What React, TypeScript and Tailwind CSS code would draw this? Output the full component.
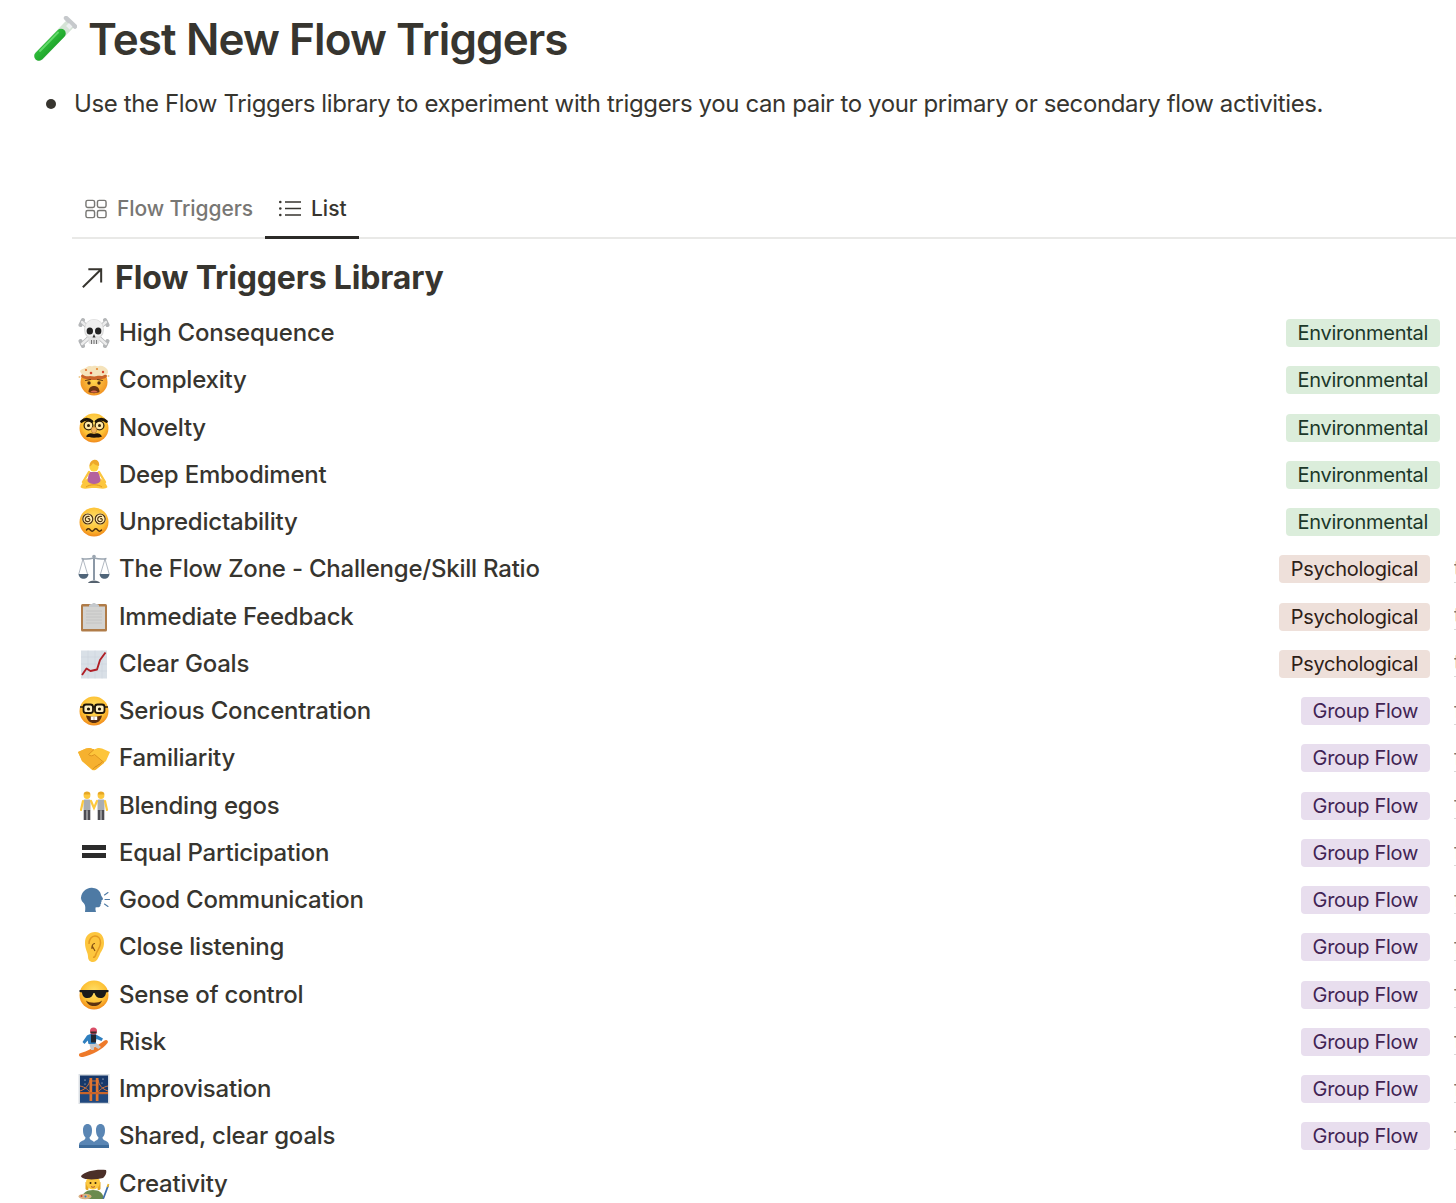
type Tag = 'Environmental' | 'Psychological' | 'Group Flow'

function FaceBase({ id, children }: { id: string; children?: React.ReactNode }) {
  return (
    <svg viewBox="0 0 32 32" className="w-[32px] h-[32px]">
      <defs>
        <radialGradient id={id} cx="50%" cy="38%" r="62%">
          <stop offset="0%" stopColor="#ffe16a" />
          <stop offset="65%" stopColor="#fdc134" />
          <stop offset="100%" stopColor="#f18a1c" />
        </radialGradient>
      </defs>
      <circle cx="16" cy="16" r="14.500" fill={`url(#${id})`} />
      {children}
    </svg>
  )
}

function Svg({ children }: { children: React.ReactNode }) {
  return (
    <svg viewBox="0 0 32 32" className="w-[32px] h-[32px]">
      {children}
    </svg>
  )
}

const Skull = () => (
  <Svg>
    <g stroke="#b4b6b8" strokeWidth="4" strokeLinecap="round">
      <path d="M4 5 28 27M28 5 4 27" />
      <path d="M2.500 8 5 3M29.500 8 27 3M2.500 24 5 29M29.500 24 27 29" />
    </g>
    <g stroke="#ececec" strokeWidth="2.400" strokeLinecap="round">
      <path d="M4 5 28 27M28 5 4 27" />
    </g>
    <ellipse cx="16" cy="12.500" rx="10" ry="10.500" fill="#d8d8d8" />
    <ellipse cx="16" cy="12" rx="9" ry="9.500" fill="#f0f0f0" />
    <rect x="10.500" y="19" width="11" height="8" rx="2" fill="#e2e2e2" />
    <ellipse cx="11.800" cy="14" rx="3.200" ry="3.500" fill="#232323" />
    <ellipse cx="20.200" cy="14" rx="3.200" ry="3.500" fill="#232323" />
    <path d="M16 17 14.500 20.500h3z" fill="#333" />
    <path d="M13.500 23v4M16 23v4M18.500 23v4" stroke="#666" strokeWidth="0.900" />
  </Svg>
)

const Exploding = () => (
  <Svg>
    <defs>
      <radialGradient id="ex" cx="50%" cy="45%" r="62%">
        <stop offset="0%" stopColor="#ffd84f" />
        <stop offset="100%" stopColor="#f08a1d" />
      </radialGradient>
    </defs>
    <circle cx="16" cy="18" r="13.500" fill="url(#ex)" />
    <ellipse cx="16" cy="12" rx="13" ry="4" fill="#c9642a" />
    <path d="M2 7c2-3 5-2 7-4 2-2 4 0 6-1 3-1 4 1 6 0 3-1 6 1 8 3 2 3 1 6-3 6-2 2-5 0-7 1-3 1-5 0-7 0-4 1-9-1-10-5z" fill="#f5e3bb" />
    <circle cx="8" cy="6" r="1.100" fill="#e06d2b" />
    <circle cx="13" cy="9" r="1.300" fill="#d8452c" />
    <circle cx="19" cy="5" r="1.100" fill="#e8862d" />
    <circle cx="25" cy="8" r="1.200" fill="#d8452c" />
    <circle cx="1.500" cy="13" r="1" fill="#f0c98a" />
    <circle cx="30.500" cy="12" r="1" fill="#f0c98a" />
    <circle cx="11" cy="19" r="1.700" fill="#4a2a12" />
    <circle cx="21" cy="19" r="1.700" fill="#4a2a12" />
    <path d="M7.500 16.500 12.500 15.500M24.500 16.500 19.500 15.500" stroke="#6a3d12" strokeWidth="1.200" strokeLinecap="round" />
    <path d="M10.500 28c0-4 2.500-6 5.500-6s5.500 2 5.500 6c-3 1.500-8 1.500-11 0z" fill="#6b3410" />
    <path d="M12.500 28c1-2 6-2 7 0-2 .8-5 .8-7 0z" fill="#d96a4f" />
  </Svg>
)

const Novelty = () => (
  <FaceBase id="f1">
    <circle cx="10.500" cy="13.500" r="4.400" fill="#ffe9a8" stroke="#332009" strokeWidth="1.300" />
    <circle cx="21.500" cy="13.500" r="4.400" fill="#ffe9a8" stroke="#332009" strokeWidth="1.300" />
    <circle cx="10.500" cy="13.500" r="1.500" fill="#332009" />
    <circle cx="21.500" cy="13.500" r="1.500" fill="#332009" />
    <path d="M3.500 9.500c3-3 7.500-3 10.500 0M28.500 9.500c-3-3-7.500-3-10.500 0" fill="none" stroke="#1d1409" strokeWidth="2.800" strokeLinecap="round" />
    <ellipse cx="16" cy="18" rx="2.800" ry="3.200" fill="#f2b45e" stroke="#a66a1c" strokeWidth="0.500" />
    <path d="M8 24.500c2-3.800 5.500-3.800 8-2.400 2.500-1.400 6-1.400 8 2.400-2.500 1.600-13.500 1.600-16 0z" fill="#20140a" />
  </FaceBase>
)

const Meditation = () => (
  <Svg>
    <path d="M2.500 28c3-7 7.500-10 13.500-10s10.500 3 13.500 10c-2 3-8.500 1-13.500 1s-11.500 2-13.500-1z" fill="#fcc63e" />
    <path d="M11 13h10l1.500 9c-2 4-11 4-13 0z" fill="#b4619e" />
    <path d="M11 13 5 23M21 13l6 10" stroke="#fcc63e" strokeWidth="2.400" strokeLinecap="round" />
    <circle cx="16" cy="8" r="4.600" fill="#fdd040" />
    <path d="M11.500 7.500c0-4 2-6 4-6.500 3-1.200 6.500 1.500 5.500 6-2-.3-5-1.500-6-3-.5 1.400-2 3-3.500 3.500z" fill="#eea92a" />
    <path d="M8 28c4-3 12-3 16 0" fill="none" stroke="#e29a20" strokeWidth="1" />
  </Svg>
)

const Dizzy = () => (
  <FaceBase id="f2">
    <circle cx="9.800" cy="13" r="5.800" fill="#ffeeb4" />
    <circle cx="22.200" cy="13" r="5.800" fill="#ffeeb4" />
    <g fill="none" stroke="#4f300e" strokeWidth="1.200">
      <circle cx="9.800" cy="13" r="5" />
      <circle cx="22.200" cy="13" r="5" />
      <path d="M9.800 13c1-.9 2.400 0 2 1.400-.6 1.800-3.800 1.700-4.400-.4-.6-2.400 1.700-4.300 4.200-3.500" />
      <path d="M22.200 13c1-.9 2.400 0 2 1.400-.6 1.800-3.800 1.700-4.400-.4-.6-2.400 1.700-4.300 4.200-3.500" />
    </g>
    <path d="M8.500 24c1.300-1.600 2.500-1.600 3.800 0s2.400 1.600 3.700 0 2.400-1.600 3.700 0 2.500 1.600 3.800 0" fill="none" stroke="#4f300e" strokeWidth="1.400" strokeLinecap="round" />
  </FaceBase>
)

const Scales = () => (
  <Svg>
    <rect x="15" y="3" width="2" height="24" fill="#8b98a6" />
    <path d="M10 30c1-3.500 11-3.500 12 0z" fill="#55626f" />
    <path d="M3.500 5.500c4 1 8.500.5 12.500-.5 4 1 8.500 1.500 12.500.5" fill="none" stroke="#9aa5b0" strokeWidth="1.600" />
    <circle cx="16" cy="3.500" r="1.800" fill="#9aa5b0" />
    <path d="M5 6 .8 21M5 6l4.500 15M27 6l-4.500 15M27 6l4.200 15" stroke="#8f9aa6" strokeWidth="0.700" />
    <path d="M.5 21h10c-.5 3.500-2.700 4.700-5 4.700S1 24.500.5 21z" fill="#506579" />
    <path d="M21.500 21h10c-.5 3.500-2.700 4.700-5 4.700s-4.500-1.200-5-4.700z" fill="#506579" />
  </Svg>
)

const Clipboard = () => (
  <Svg>
    <rect x="3" y="3" width="26" height="27.500" rx="1.500" fill="#b07c48" />
    <rect x="5" y="5.500" width="22" height="22.500" fill="#d3d3d1" />
    <path d="M8 10h16M8 13h16M8 16h16M8 19h16M8 22h16" stroke="#c2c2c0" strokeWidth="0.800" />
    <path d="M11 4.500c0-1 1.500-1.500 3-1.500 .3-1.500 3.700-1.500 4 0 1.500 0 3 .5 3 1.500v1.500H11z" fill="#c4c8cc" />
  </Svg>
)

const Chart = () => (
  <Svg>
    <rect x="3" y="2.500" width="26" height="28" fill="#d9e0e7" />
    <path d="M3 9h26M3 16h26M3 23h26M10 2.500v28M17 2.500v28M24 2.500v28" stroke="#c9d1d9" strokeWidth="0.500" />
    <path d="M4 27 8.500 20.500 12.500 23 19 21.500 22 12 27.500 4.500" fill="none" stroke="#b01f26" strokeWidth="1.900" strokeLinejoin="round" />
  </Svg>
)

const Nerd = () => (
  <FaceBase id="f3">
    <path d="M2 12h28" stroke="#1d1409" strokeWidth="1.400" />
    <rect x="5.500" y="9.500" width="9.500" height="8.500" rx="2.500" fill="#fff2c4" stroke="#1d1409" strokeWidth="1.800" />
    <rect x="17" y="9.500" width="9.500" height="8.500" rx="2.500" fill="#fff2c4" stroke="#1d1409" strokeWidth="1.800" />
    <circle cx="10.500" cy="14" r="1.600" fill="#1d1409" />
    <circle cx="21.500" cy="14" r="1.600" fill="#1d1409" />
    <path d="M8 20.500c5 1.500 11 1.500 16 0-1 5-4 7.500-8 7.500s-7-2.500-8-7.500z" fill="#5a2f10" />
    <rect x="12.800" y="21.500" width="3" height="3.500" fill="#fff" />
    <rect x="16.200" y="21.500" width="3" height="3.500" fill="#fff" />
  </FaceBase>
)

const Handshake = () => (
  <Svg>
    <path d="M0 10 8 6.500c3-1 5-.5 8 1 3-1.500 5-2 8-1l8 3.500-4 9-10 8.500c-2 1.500-4 .7-5-.5L4 19z" fill="#fdc53a" />
    <path d="M0 10 8 6.500c3-1 5-.5 8 1l-5.500 5c2 2 4 1.500 6 0L26 21l-8 6.500c-2 1-3.800.2-5-1L4 19z" fill="#f6b12f" />
    <path d="M10.500 12.500 16 7.500M10.500 12.500c2 2 4 1.500 6 0L26 20.500" fill="none" stroke="#dd9420" strokeWidth="1" />
    <path d="M15 27l3-3M18 25l3-3M21 23l3-3" stroke="#dd9420" strokeWidth="1" strokeLinecap="round" />
  </Svg>
)

const Holding = () => (
  <Svg>
    {[9, 23].map((x) => (
      <g key={x}>
        <circle cx={x} cy="5.500" r="3.400" fill="#fdc93f" />
        <path d={`M${x - 3.400} 4.500c0-2 1.500-3 3.400-3s3.400 1 3.400 3z`} fill="#e6a725" />
        <rect x={x - 3.500} y="9.500" width="7" height="11" rx="1" fill="#a9adb3" />
        <rect x={x - 3.300} y="20" width="2.900" height="10" fill="#4c4c52" />
        <rect x={x + 0.400} y="20" width="2.900" height="10" fill="#4c4c52" />
      </g>
    ))}
    <path d="M5 11 3 20M27 11 29 20M13 11 16 18l3-7" fill="none" stroke="#fdc93f" strokeWidth="2.200" strokeLinecap="round" />
  </Svg>
)

const EqualSign = () => (
  <Svg>
    <rect x="4" y="8" width="24" height="5" fill="#2b2b2b" />
    <rect x="4" y="16" width="24" height="5" fill="#2b2b2b" />
  </Svg>
)

const Speaking = () => (
  <Svg>
    <path d="M3 17C2 8 9 3 15 4c5 .5 7.500 3.500 8 7 .2 1 2 3 2 4s-1.500 1-1.500 1.500c0 1 .3 1.500-.5 2 .5 1 0 1.500-.5 1.700.5 2-1 3.300-4 3.100l-1 .2c-.2 1.500 0 3 .5 4.500H7c.5-4 .5-6.500-1-8.500-1.500-1.500-2.800-3-3-5.500z" fill="#4e7aa4" />
    <path d="M26.500 11 30 8.500M27 15.500h4.500M26.500 20l3.500 2.500" stroke="#4e7aa4" strokeWidth="1.100" strokeLinecap="round" />
  </Svg>
)

const Ear = () => (
  <Svg>
    <path d="M7 12C7 5 11 1 17 1s9 4.500 9 11c0 5-2.500 8-4 11-1.300 3-3 8-7 8-3.500 0-5-2.500-5-5.500 0-4-3-7-3-13.500z" fill="#fdc63e" />
    <path d="M11 13c0-4.500 2.500-8 6-8s5.500 3 5.500 7c0 4.500-3.500 7.500-4.500 11-.5 2-1.500 3.500-3 3.300" fill="none" stroke="#e39a22" strokeWidth="1.500" />
    <path d="M14 18c-.5-2.500.5-5.500 3-5.500M14.500 15.500l2.500 4.500" fill="none" stroke="#7d4a10" strokeWidth="1.100" />
  </Svg>
)

const Cool = () => (
  <FaceBase id="f4">
    <path d="M1.500 11h29v2l-2.500.5c-.3 3.500-2 5.500-5.500 5.500-3.300 0-5.200-2-6-5h-1c-.8 3-2.700 5-6 5-3.500 0-5.200-2-5.500-5.500L1.500 13z" fill="#1a1a1a" />
    <path d="M8 21.500c3 3 13 3 16 0-1 3.500-4 5.500-8 5.500s-7-2-8-5.500z" fill="#5d3311" />
  </FaceBase>
)

const Snowboarder = () => (
  <Svg>
    <path d="M1.500 27.500c7-2 18-7.500 25-13 2-1.500 4.500.5 3 2.500C25 23 14.500 29 5 31c-3 .5-5-1.500-3.500-3.500z" fill="#ee7a2a" />
    <path d="M13 24l-2-7 6-1 6 5-2.500 2-4-2.500-.8 3.500z" fill="#c8c8c8" />
    <path d="M9 9.500c3-2 7-2.500 9-1l7 4-1.500 2.500-5-2-1 5-7 0-.8-3.500-3.200 3.500-2-2z" fill="#2f7fbf" />
    <rect x="13" y="8.500" width="5" height="8" fill="#23262e" />
    <circle cx="15.500" cy="5" r="3.500" fill="#d94c66" />
    <rect x="12.500" y="5.500" width="6" height="2" fill="#3a2a2a" />
  </Svg>
)

const Bridge = () => (
  <Svg>
    <rect x=".5" y="1" width="31" height="30" fill="#d9dee3" />
    <rect x="2" y="2.500" width="28" height="27" fill="#17386a" />
    <rect x="2" y="21" width="28" height="8.500" fill="#21497f" />
    <path d="M2 13c5 1 9 4 10 7M30 13c-5 1-9 4-10 7M12 7c-1 5-4 9-10 11M20 7c1 5 4 9 10 11" fill="none" stroke="#d8753a" strokeWidth="1" />
    <path d="M11.500 28V5h2.700v23zM17.800 28V5h2.700v23z" fill="#e2752f" />
    <rect x="2" y="19" width="28" height="2.200" fill="#c9642a" />
    <path d="M14 8h4M14 12h4" stroke="#e2752f" strokeWidth="1" />
    <circle cx="7" cy="7" r="0.600" fill="#fff" />
    <circle cx="25" cy="6" r="0.600" fill="#fff" />
    <circle cx="24" cy="10" r="0.500" fill="#fff" />
    <circle cx="7" cy="11" r="0.500" fill="#fff" />
  </Svg>
)

const Busts = () => (
  <Svg>
    <path d="M1 28v-3c0-3 3-4 5-5 1-.7 1.500-1.500 1.500-2.500C5.500 16 5 13 5 10c0-4 2-6 4.500-6S14 6 14 10c0 3-.5 6-2.500 7.500 0 1 .5 1.800 1.500 2.500 1.500.8 2.500 1.300 3 2 .5-.7 1.500-1.200 3-2 1-.7 1.500-1.500 1.500-2.500-2-1.500-2.500-4.500-2.500-7.500 0-4 2-6 4.500-6S27 6 27 10c0 3-.5 6-2.500 7.500 0 1 .5 1.800 1.500 2.500 2 1 5 2 5 5v3z" fill="#5a86b4" />
    <path d="M1 25h30v3H1z" fill="#3f6d9c" />
  </Svg>
)

const Artist = () => (
  <Svg>
    <path d="M4 31c0-6 4.500-9 11-9s10 3 11 9z" fill="#6b8a4e" />
    <path d="M7.500 14v7c1.500 2 3 1 3 0v-6zM22.500 14v7c-1.500 2-3 1-3 0v-6z" fill="#e6a725" />
    <circle cx="15" cy="14.500" r="7" fill="#fdc93f" />
    <path d="M3 8C7.500 3 18 1 28 2c1 2.500-.5 6-3 8-5 1.500-15 2-19 .5C4.500 10 3 9 3 8z" fill="#4b2f28" />
    <circle cx="12.500" cy="15" r="1" fill="#3a2409" />
    <circle cx="17.500" cy="15" r="1" fill="#3a2409" />
    <path d="M13 18.500c1.200 1 2.800 1 4 0" fill="none" stroke="#a34a2a" strokeWidth="0.900" />
    <ellipse cx="7" cy="28.500" rx="6.500" ry="2.700" fill="#d9b184" />
    <circle cx="3.500" cy="28" r="1" fill="#d8352c" />
    <circle cx="7.500" cy="28.500" r="1" fill="#2f7fbf" />
    <circle cx="10.500" cy="28" r="0.900" fill="#e8b52e" />
    <path d="M30 18 25.500 30" stroke="#3f6fae" strokeWidth="1.800" strokeLinecap="round" />
    <path d="M30.500 16 29.500 19" stroke="#e8b52e" strokeWidth="1.800" />
  </Svg>
)

const TestTube = () => (
  <svg viewBox="0 0 44 46" className="w-[44px] h-[46px] shrink-0">
    <defs>
      <linearGradient id="tube" x1="0" y1="0" x2="1" y2="1">
        <stop offset="0%" stopColor="#3ed34a" />
        <stop offset="100%" stopColor="#0f8f1b" />
      </linearGradient>
    </defs>
    <path d="M6 40 36 9" stroke="#d5e3d6" strokeWidth="10" strokeLinecap="round" />
    <path d="M6 40 28 17.500" stroke="url(#tube)" strokeWidth="9.500" strokeLinecap="round" />
    <path d="M7 35 25 16.500" stroke="#7be880" strokeWidth="1.800" strokeLinecap="round" opacity="0.700" />
    <path d="M33 2 42 10.500" stroke="#c6c9cc" strokeWidth="4.500" strokeLinecap="round" />
    <path d="M34.500 8.500 38 12" stroke="#eef0f1" strokeWidth="4" />
  </svg>
)

const tagStyles: Record<Tag, string> = {
  Environmental: 'bg-[#dbeddb] text-[#1c3829] mr-[16px]',
  Psychological: 'bg-[#eee0da] text-[#2e2017] mr-[24px]',
  'Group Flow': 'bg-[#e8deee] text-[#412454] mr-[24px]',
}

const rows: { name: string; icon: React.ReactNode; tag?: Tag; trail?: string }[] = [
  { name: 'High Consequence', icon: <Skull />, tag: 'Environmental' },
  { name: 'Complexity', icon: <Exploding />, tag: 'Environmental' },
  { name: 'Novelty', icon: <Novelty />, tag: 'Environmental' },
  { name: 'Deep Embodiment', icon: <Meditation />, tag: 'Environmental' },
  { name: 'Unpredictability', icon: <Dizzy />, tag: 'Environmental' },
  { name: 'The Flow Zone - Challenge/Skill Ratio', icon: <Scales />, tag: 'Psychological', trail: 't' },
  { name: 'Immediate Feedback', icon: <Clipboard />, tag: 'Psychological', trail: 't' },
  { name: 'Clear Goals', icon: <Chart />, tag: 'Psychological', trail: 't' },
  { name: 'Serious Concentration', icon: <Nerd />, tag: 'Group Flow', trail: 'f' },
  { name: 'Familiarity', icon: <Handshake />, tag: 'Group Flow', trail: 'f' },
  { name: 'Blending egos', icon: <Holding />, tag: 'Group Flow', trail: 'f' },
  { name: 'Equal Participation', icon: <EqualSign />, tag: 'Group Flow', trail: 'f' },
  { name: 'Good Communication', icon: <Speaking />, tag: 'Group Flow', trail: 'f' },
  { name: 'Close listening', icon: <Ear />, tag: 'Group Flow', trail: 'f' },
  { name: 'Sense of control', icon: <Cool />, tag: 'Group Flow', trail: 'f' },
  { name: 'Risk', icon: <Snowboarder />, tag: 'Group Flow', trail: 'f' },
  { name: 'Improvisation', icon: <Bridge />, tag: 'Group Flow', trail: 'f' },
  { name: 'Shared, clear goals', icon: <Busts />, tag: 'Group Flow', trail: 'f' },
  { name: 'Creativity', icon: <Artist /> },
]

export default function App() {
  return (
    <div className="w-[1456px] h-[1203px] overflow-hidden bg-white text-[#37352f] font-['Inter',sans-serif]">
      <div className="flex items-center gap-[11px] pl-[33px] pt-[14px] h-[64px]">
        <TestTube />
        <h1 className="text-[44px] leading-[50px] font-semibold tracking-[-0.9px]">Test New Flow Triggers</h1>
      </div>

      <div className="flex items-center pl-[46px] mt-[24px] h-[32px]">
        <div className="w-[10px] h-[10px] rounded-full bg-[#37352f] mr-[18px]"></div>
        <p className="text-[24px] leading-[32px] tracking-[-0.375px]">
          Use the Flow Triggers library to experiment with triggers you can pair to your primary or secondary flow activities.
        </p>
      </div>

      <div className="ml-[72px] mt-[61px] flex h-[58px] border-b-2 border-[#e9e9e7]">
        <div className="flex items-center gap-[10px] pl-[13px] pr-[12px] text-[21px] font-medium tracking-[-0.08px] text-[#787774]">
          <svg viewBox="0 0 23 20" className="w-[22px] h-[20px]" fill="none" stroke="#787774" strokeWidth="1.500">
            <rect x="1" y="1" width="9" height="7.500" rx="1.800" />
            <rect x="13" y="1" width="9" height="7.500" rx="1.800" />
            <rect x="1" y="11.500" width="9" height="7.500" rx="1.800" />
            <rect x="13" y="11.500" width="9" height="7.500" rx="1.800" />
          </svg>
          <span>Flow Triggers</span>
        </div>
        <div className="flex items-center gap-[10px] pl-[14px] pr-[12px] -mb-[2px] border-b-[3px] border-[#2b2a27] text-[21px] font-medium text-[#37352f]">
          <svg viewBox="0 0 22 17" className="w-[22px] h-[17px]" fill="none" stroke="#37352f" strokeWidth="1.700">
            <path d="M6 2h16M6 8.500h16M6 15h16" />
            <circle cx="1.300" cy="2" r="1.300" fill="#37352f" stroke="none" />
            <circle cx="1.300" cy="8.500" r="1.300" fill="#37352f" stroke="none" />
            <circle cx="1.300" cy="15" r="1.300" fill="#37352f" stroke="none" />
          </svg>
          <span>List</span>
        </div>
      </div>

      <div className="ml-[72px] flex items-center gap-[12px] pl-[9px] mt-[17px] h-[44px]">
        <svg viewBox="0 0 24 24" className="w-[22px] h-[22px]" fill="none" stroke="#37352f" strokeWidth="2.200">
          <path d="M2 22 22 2.500M8 2.500H22V17" />
        </svg>
        <h2 className="text-[32px] leading-[44px] font-bold tracking-[-0.15px]">Flow Triggers Library</h2>
      </div>

      <div className="ml-[72px] mt-[9.4px]">
        {rows.map((row) => (
          <div key={row.name} className="flex items-center h-[47.25px] pl-[6px]">
            {row.icon}
            <span className="ml-[9px] text-[24px] leading-[32px] font-medium tracking-[-0.22px] text-[#37352f]">{row.name}</span>
            {row.tag && (
              <span className={`ml-auto h-[28px] rounded-[4px] px-[12px] text-[20px] leading-[28px] tracking-[-0.3px] ${tagStyles[row.tag]}`}>
                {row.tag}
              </span>
            )}
            {row.trail && (
              <span className="w-[2px] overflow-hidden text-[21px] leading-[26px] text-[#787774] border-b border-[#d9d9d7]">
                {row.trail}
              </span>
            )}
          </div>
        ))}
      </div>
    </div>
  )
}
